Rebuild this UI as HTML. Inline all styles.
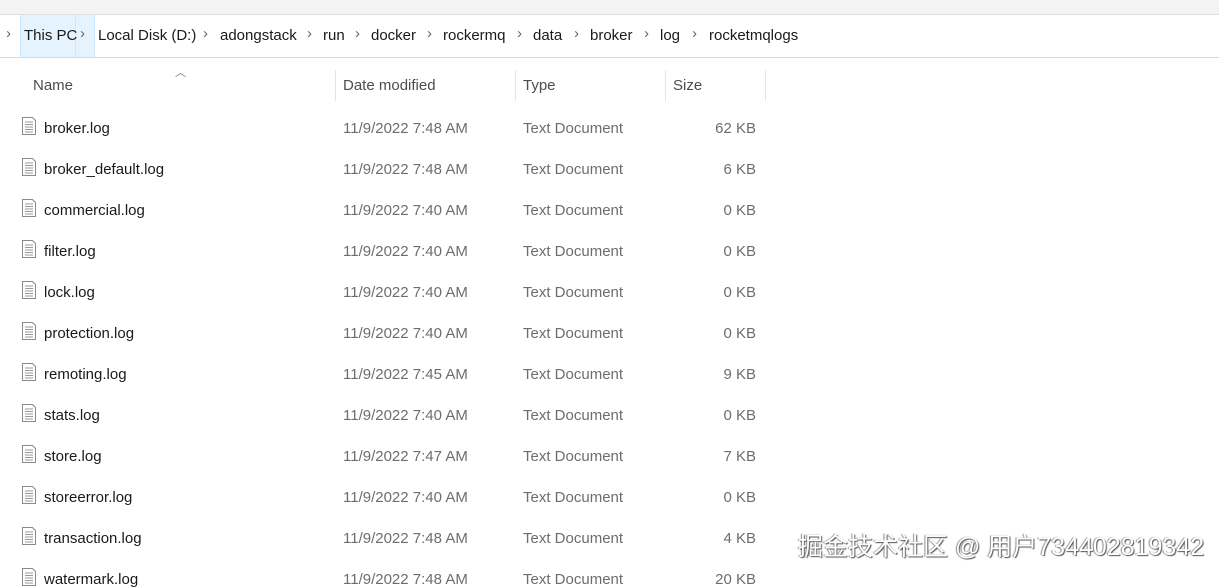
<!DOCTYPE html>
<html><head><meta charset="utf-8"><style>
body{margin:0;width:1219px;height:575px;overflow:hidden;background:#fff;font-family:"Segoe UI","Liberation Sans",sans-serif;position:relative}
.top{position:absolute;left:0;top:0;width:1219px;height:14px;background:#f3f3f3;border-bottom:1px solid #e0e0e0}
.bc{position:absolute;top:15px;height:42px;left:0;width:1219px;border-bottom:1px solid #d9d9d9;font-size:15px;color:#1a1a1a}
.bc span{position:absolute;top:12px}
.bc span.ch{top:10px;font-size:15px;color:#666}
.hl{position:absolute;left:20px;top:0;width:73px;height:42px;background:#e5f3ff;border-left:1px solid #cce8ff;border-right:1px solid #cce8ff}
.hl2{position:absolute;left:75px;top:0;width:1px;height:42px;background:#cce8ff}
.hd{position:absolute;top:77px;font-size:15px;color:#4d4d4d}
.div{position:absolute;top:70px;width:1px;height:31px;background:#e5e5e5}
.row{position:absolute;left:0;width:800px;height:20px;font-size:15px}
.row span{position:absolute;top:3px}
.row .n{left:44px;color:#1a1a1a}
.row .d{left:343px;color:#6d6d6d}
.row .t{left:523px;color:#6d6d6d}
.row .s{right:44px;color:#6d6d6d;text-align:right}
.row svg{position:absolute;left:22px;top:0px}
.wm{position:absolute;left:798px;top:527px;font-size:25px;color:#fff;font-family:"Liberation Sans","Noto Sans CJK SC",sans-serif;text-shadow:1px 1px 1px #555,-1px 0 1px #888;letter-spacing:0px}
</style></head><body>
<div class="top"></div>
<div class="bc">
<div class="hl"></div><div class="hl2"></div>
<span class="ch" style="left:6px">›</span>
<span style="left:24px">This PC</span>
<span class="ch" style="left:80px">›</span>
<span style="left:98px">Local Disk (D:)</span>
<span class="ch" style="left:203px">›</span>
<span style="left:220px">adongstack</span>
<span class="ch" style="left:307px">›</span>
<span style="left:323px">run</span>
<span class="ch" style="left:355px">›</span>
<span style="left:371px">docker</span>
<span class="ch" style="left:427px">›</span>
<span style="left:443px">rockermq</span>
<span class="ch" style="left:517px">›</span>
<span style="left:533px">data</span>
<span class="ch" style="left:574px">›</span>
<span style="left:590px">broker</span>
<span class="ch" style="left:644px">›</span>
<span style="left:660px">log</span>
<span class="ch" style="left:692px">›</span>
<span style="left:709px">rocketmqlogs</span>
</div>
<div style="position:absolute;left:175px;top:64px;font-size:11px;color:#777">︿</div>
<div class="hd" style="left:33px">Name</div>
<div class="div" style="left:335px"></div>
<div class="hd" style="left:343px">Date modified</div>
<div class="div" style="left:515px"></div>
<div class="hd" style="left:523px">Type</div>
<div class="div" style="left:665px"></div>
<div class="hd" style="left:673px">Size</div>
<div class="div" style="left:765px"></div>
<div class="row" style="top:117px"><svg width="14" height="18"><path d="M.5.5h10l3 3v14H.5z" fill="#fff" stroke="#8a8a8a"/><path d="M3 5h8M3 7.5h8M3 10h8M3 12.5h8M3 15h8" stroke="#999"/></svg><span class="n">broker.log</span><span class="d">11/9/2022 7:48 AM</span><span class="t">Text Document</span><span class="s">62 KB</span></div>
<div class="row" style="top:158px"><svg width="14" height="18"><path d="M.5.5h10l3 3v14H.5z" fill="#fff" stroke="#8a8a8a"/><path d="M3 5h8M3 7.5h8M3 10h8M3 12.5h8M3 15h8" stroke="#999"/></svg><span class="n">broker_default.log</span><span class="d">11/9/2022 7:48 AM</span><span class="t">Text Document</span><span class="s">6 KB</span></div>
<div class="row" style="top:199px"><svg width="14" height="18"><path d="M.5.5h10l3 3v14H.5z" fill="#fff" stroke="#8a8a8a"/><path d="M3 5h8M3 7.5h8M3 10h8M3 12.5h8M3 15h8" stroke="#999"/></svg><span class="n">commercial.log</span><span class="d">11/9/2022 7:40 AM</span><span class="t">Text Document</span><span class="s">0 KB</span></div>
<div class="row" style="top:240px"><svg width="14" height="18"><path d="M.5.5h10l3 3v14H.5z" fill="#fff" stroke="#8a8a8a"/><path d="M3 5h8M3 7.5h8M3 10h8M3 12.5h8M3 15h8" stroke="#999"/></svg><span class="n">filter.log</span><span class="d">11/9/2022 7:40 AM</span><span class="t">Text Document</span><span class="s">0 KB</span></div>
<div class="row" style="top:281px"><svg width="14" height="18"><path d="M.5.5h10l3 3v14H.5z" fill="#fff" stroke="#8a8a8a"/><path d="M3 5h8M3 7.5h8M3 10h8M3 12.5h8M3 15h8" stroke="#999"/></svg><span class="n">lock.log</span><span class="d">11/9/2022 7:40 AM</span><span class="t">Text Document</span><span class="s">0 KB</span></div>
<div class="row" style="top:322px"><svg width="14" height="18"><path d="M.5.5h10l3 3v14H.5z" fill="#fff" stroke="#8a8a8a"/><path d="M3 5h8M3 7.5h8M3 10h8M3 12.5h8M3 15h8" stroke="#999"/></svg><span class="n">protection.log</span><span class="d">11/9/2022 7:40 AM</span><span class="t">Text Document</span><span class="s">0 KB</span></div>
<div class="row" style="top:363px"><svg width="14" height="18"><path d="M.5.5h10l3 3v14H.5z" fill="#fff" stroke="#8a8a8a"/><path d="M3 5h8M3 7.5h8M3 10h8M3 12.5h8M3 15h8" stroke="#999"/></svg><span class="n">remoting.log</span><span class="d">11/9/2022 7:45 AM</span><span class="t">Text Document</span><span class="s">9 KB</span></div>
<div class="row" style="top:404px"><svg width="14" height="18"><path d="M.5.5h10l3 3v14H.5z" fill="#fff" stroke="#8a8a8a"/><path d="M3 5h8M3 7.5h8M3 10h8M3 12.5h8M3 15h8" stroke="#999"/></svg><span class="n">stats.log</span><span class="d">11/9/2022 7:40 AM</span><span class="t">Text Document</span><span class="s">0 KB</span></div>
<div class="row" style="top:445px"><svg width="14" height="18"><path d="M.5.5h10l3 3v14H.5z" fill="#fff" stroke="#8a8a8a"/><path d="M3 5h8M3 7.5h8M3 10h8M3 12.5h8M3 15h8" stroke="#999"/></svg><span class="n">store.log</span><span class="d">11/9/2022 7:47 AM</span><span class="t">Text Document</span><span class="s">7 KB</span></div>
<div class="row" style="top:486px"><svg width="14" height="18"><path d="M.5.5h10l3 3v14H.5z" fill="#fff" stroke="#8a8a8a"/><path d="M3 5h8M3 7.5h8M3 10h8M3 12.5h8M3 15h8" stroke="#999"/></svg><span class="n">storeerror.log</span><span class="d">11/9/2022 7:40 AM</span><span class="t">Text Document</span><span class="s">0 KB</span></div>
<div class="row" style="top:527px"><svg width="14" height="18"><path d="M.5.5h10l3 3v14H.5z" fill="#fff" stroke="#8a8a8a"/><path d="M3 5h8M3 7.5h8M3 10h8M3 12.5h8M3 15h8" stroke="#999"/></svg><span class="n">transaction.log</span><span class="d">11/9/2022 7:48 AM</span><span class="t">Text Document</span><span class="s">4 KB</span></div>
<div class="row" style="top:568px"><svg width="14" height="18"><path d="M.5.5h10l3 3v14H.5z" fill="#fff" stroke="#8a8a8a"/><path d="M3 5h8M3 7.5h8M3 10h8M3 12.5h8M3 15h8" stroke="#999"/></svg><span class="n">watermark.log</span><span class="d">11/9/2022 7:48 AM</span><span class="t">Text Document</span><span class="s">20 KB</span></div>
<div class="wm">掘金技术社区 @ 用户734402819342</div>
</body></html>
